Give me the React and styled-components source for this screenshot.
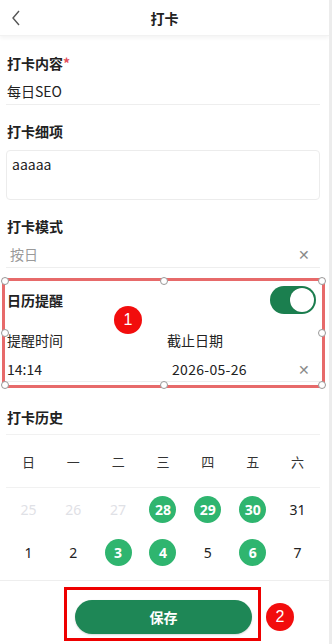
import React from "react"
import styled, { createGlobalStyle } from "styled-components"

const GlobalStyle = createGlobalStyle`
  html, body { margin: 0; padding: 0; background: #fff; }
  body {
    font-family: "Noto Sans CJK SC", "Noto Sans", Roboto, sans-serif;
    color: #222;
  }
`

const Page = styled.div`
  width: 329px;
  height: 644px;
  border-right: 3px solid #ececec;
  display: flex;
  flex-direction: column;
  overflow: hidden;
`

const Header = styled.div`
  height: 36px;
  flex: 0 0 36px;
  display: flex;
  align-items: center;
  justify-content: center;
  position: relative;
  box-shadow: 0 2px 4px rgba(0, 0, 0, 0.05);
  border-bottom: 1px solid #f2f2f2;
  box-sizing: border-box;
`

const Back = styled.div`
  position: absolute;
  left: 10px;
  top: 9px;
  width: 14px;
  height: 18px;
  display: flex;
`

const Title = styled.div`
  font-size: 14px;
  font-weight: 700;
  color: #222;
`

const Content = styled.div`
  flex: 1;
  padding: 17px 9px 0 6px;
  display: flex;
  flex-direction: column;
`

const Label = styled.div`
  height: 20px;
  line-height: 20px;
  font-size: 14px;
  font-weight: 700;
  padding-left: 1px;
  margin-top: ${p => p.$top || 0}px;
  span { color: #e34d59; }
`

const FieldRow = styled.div`
  height: 27px;
  margin-top: 4px;
  display: flex;
  align-items: center;
  justify-content: space-between;
  border-bottom: 1px solid #eeeeee;
  font-size: 14px;
  color: ${p => (p.$placeholder ? "#9a9a9a" : "#222")};
  padding-left: ${p => (p.$placeholder ? 4 : 1)}px;
  padding-right: 10px;
`

const Clear = styled.span`
  color: #8a8a8a;
  font-size: 14px;
`

const TextBox = styled.div`
  margin-top: 9px;
  height: 50px;
  border: 1px solid #ececec;
  border-radius: 4px;
  box-sizing: border-box;
  padding: 4px 5px;
  font-size: 14px;
  line-height: 18px;
`

const Reminder = styled.div`
  position: relative;
  margin-top: 10px;
  padding-top: 8px;
`

const ToggleRow = styled.div`
  height: 28px;
  display: flex;
  align-items: center;
  justify-content: space-between;
  padding-left: 1px;
  padding-right: 4px;
  font-size: 14px;
  font-weight: 700;
`

const Switch = styled.div`
  width: 46px;
  height: 28px;
  border-radius: 14px;
  background: #1b7f4f;
  display: flex;
  align-items: center;
  justify-content: flex-end;
  padding: 2px;
  box-sizing: border-box;
`

const Knob = styled.div`
  width: 24px;
  height: 24px;
  border-radius: 50%;
  background: #fff;
  box-shadow: 0 0 1px rgba(0, 0, 0, 0.3);
`

const TwoCol = styled.div`
  display: grid;
  grid-template-columns: 160px 1fr;
  margin-top: ${p => p.$top || 0}px;
  height: ${p => p.$h}px;
  align-items: center;
  font-size: 14px;
  padding-left: 1px;
  border-bottom: ${p => (p.$line ? "1px solid #eeeeee" : "none")};
`

const DateCell = styled.div`
  display: flex;
  justify-content: space-between;
  padding-left: 5px;
  padding-right: 10px;
  letter-spacing: 0.3px;
`

const MarkBox = styled.div`
  position: absolute;
  left: -4px;
  right: -5px;
  top: 0;
  bottom: -6px;
  border: 3px solid #e76a6a;
  pointer-events: none;
`

const Handle = styled.div`
  position: absolute;
  width: 6px;
  height: 6px;
  border-radius: 50%;
  background: #fff;
  border: 1px solid #999;
  left: ${p => p.$x};
  top: ${p => p.$y};
  transform: translate(-50%, -50%);
`

const Badge = styled.div`
  position: absolute;
  width: 28px;
  height: 28px;
  border-radius: 50%;
  background: #f20d0d;
  color: #fff;
  font-family: "Liberation Sans", Arial, sans-serif;
  font-size: 16px;
  display: flex;
  align-items: center;
  justify-content: center;
  left: ${p => p.$left}px;
  top: ${p => p.$top}px;
`

const Calendar = styled.div`
  margin-top: 7px;
`

const Divider = styled.div`
  height: 1px;
  background: #f1f1f1;
`

const Week = styled.div`
  display: grid;
  grid-template-columns: repeat(7, 1fr);
  height: ${p => p.$h}px;
  align-items: center;
  justify-items: center;
  font-size: 13px;
  color: #333;
`

const Day = styled.div`
  width: 27px;
  height: 27px;
  border-radius: 50%;
  display: flex;
  align-items: center;
  justify-content: center;
  font-family: "Noto Sans", Roboto, sans-serif;
  font-size: 14px;
  font-weight: ${p => (p.$done ? 700 : 400)};
  background: ${p => (p.$done ? "#2fb56f" : "transparent")};
  color: ${p => (p.$done ? "#fff" : p.$muted ? "#dfe1e6" : "#222")};
`

const Footer = styled.div`
  flex: 0 0 64px;
  border-top: 1px solid #eeeeee;
  box-sizing: border-box;
  display: flex;
  justify-content: center;
  padding-top: 19px;
`

const SaveWrap = styled.div`
  position: relative;
  margin-left: -2px;
`

const SaveButton = styled.div`
  width: 177px;
  height: 34px;
  border-radius: 17px;
  background: #1e8756;
  color: #fff;
  font-size: 14px;
  font-weight: 700;
  display: flex;
  align-items: center;
  justify-content: center;
  box-shadow: 0 1px 2px rgba(0, 0, 0, 0.15);
`

const RedFrame = styled.div`
  position: absolute;
  left: -11px;
  top: -13px;
  width: 197px;
  height: 54px;
  box-sizing: border-box;
  border: 3px solid #ee0000;
`

const weekdays = ["日", "一", "二", "三", "四", "五", "六"]
const rows = [
  [{ d: 25, m: true }, { d: 26, m: true }, { d: 27, m: true }, { d: 28, x: true }, { d: 29, x: true }, { d: 30, x: true }, { d: 31 }],
  [{ d: 1 }, { d: 2 }, { d: 3, x: true }, { d: 4, x: true }, { d: 5 }, { d: 6, x: true }, { d: 7 }],
]

const handles = [
  ["0%", "0%"], ["50%", "0%"], ["100%", "0%"],
  ["0%", "50%"], ["100%", "50%"],
  ["0%", "100%"], ["50%", "100%"], ["100%", "100%"],
]

export default function App() {
  return (
    <Page>
      <GlobalStyle />
      <Header>
        <Back>
          <svg width="14" height="18" viewBox="0 0 14 18">
            <polyline points="9,2 3,9 9,16" fill="none" stroke="#555" strokeWidth="1.4" />
          </svg>
        </Back>
        <Title>打卡</Title>
      </Header>

      <Content>
        <Label>打卡内容<span>*</span></Label>
        <FieldRow>每日SEO</FieldRow>

        <Label $top={16}>打卡细项</Label>
        <TextBox>aaaaa</TextBox>

        <Label $top={16}>打卡模式</Label>
        <FieldRow $placeholder>
          按日
          <Clear>✕</Clear>
        </FieldRow>

        <Reminder>
          <ToggleRow>
            日历提醒
            <Switch><Knob /></Switch>
          </ToggleRow>
          <TwoCol $top={16} $h={20}>
            <div>提醒时间</div>
            <div>截止日期</div>
          </TwoCol>
          <TwoCol $top={6} $h={25} $line>
            <div>14:14</div>
            <DateCell>
              2026-05-26
              <Clear>✕</Clear>
            </DateCell>
          </TwoCol>
          <MarkBox>
            {handles.map(([x, y], i) => (
              <Handle key={i} $x={x} $y={y} />
            ))}
          </MarkBox>
          <Badge $left={108} $top={28}>1</Badge>
        </Reminder>

        <Label $top={25}>打卡历史</Label>
        <Calendar>
          <Divider />
          <Week $h={52}>
            {weekdays.map(w => <div key={w}>{w}</div>)}
          </Week>
          <Divider />
          {rows.map((r, i) => (
            <Week key={i} $h={43}>
              {r.map(c => (
                <Day key={c.d} $done={c.x} $muted={c.m}>{c.d}</Day>
              ))}
            </Week>
          ))}
        </Calendar>
      </Content>

      <Footer>
        <SaveWrap>
          <SaveButton>保存</SaveButton>
          <RedFrame />
          <Badge $left={191} $top={3}>2</Badge>
        </SaveWrap>
      </Footer>
    </Page>
  )
}
